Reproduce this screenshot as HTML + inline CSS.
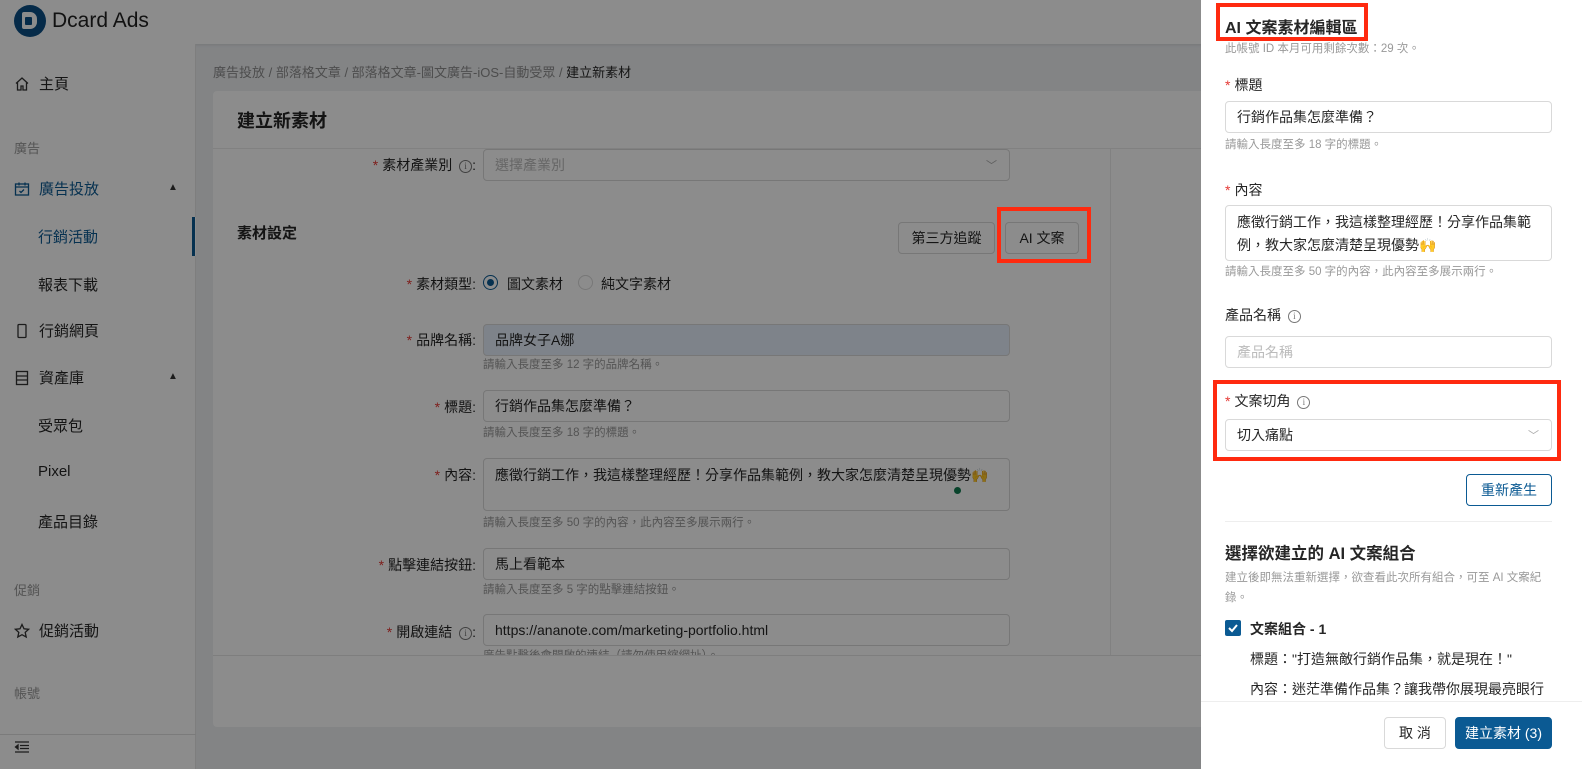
<!DOCTYPE html>
<html><head><meta charset="utf-8"><style>
*{box-sizing:border-box;margin:0;padding:0}
body{width:1582px;height:769px;overflow:hidden;position:relative;background:#eef0f3;font-family:"Liberation Sans","Noto Sans CJK TC",sans-serif;color:#262626;font-size:14px}
.a{position:absolute;white-space:nowrap}
.inp{position:absolute;border:1px solid #d9d9d9;border-radius:4px;background:#fff;padding:0 11px;display:flex;align-items:center;font-size:14px}
.help{position:absolute;font-size:11.5px;color:#999;white-space:nowrap}
.lbl{position:absolute;font-size:14px;text-align:right;white-space:nowrap}
.req{color:#e53935;margin-right:4px}
.info{display:inline-block;width:13px;height:13px;border:1px solid #777;border-radius:50%;font-size:9px;line-height:11px;text-align:center;color:#777;vertical-align:1px;margin-left:3px;font-family:"Liberation Serif",serif}
.nav{position:absolute;left:14px;font-size:15px;display:flex;align-items:center;gap:9px;white-space:nowrap}
.sub{position:absolute;left:38px;font-size:15px;white-space:nowrap}
.sec{position:absolute;left:14px;font-size:13px;color:#999}
.btn{position:absolute;border:1px solid #d9d9d9;border-radius:4px;background:#fff;display:flex;align-items:center;justify-content:center;font-size:14px}
.red{position:absolute;border:4px solid #ff2a0f;z-index:10}
</style></head><body>
<!-- header -->
<div class="a" style="left:0;top:0;width:1582px;height:44px;background:#fff;box-shadow:0 1px 3px rgba(0,0,0,.1)"></div>
<div class="a" style="left:14px;top:5px;width:32px;height:32px;border-radius:50%;background:#0b4f86"></div>
<div class="a" style="left:22px;top:12px;width:15px;height:17px;border-radius:2px 7px 7px 2px;background:#fff"></div>
<div class="a" style="left:25px;top:17px;width:7px;height:8px;background:#0b4f86;border-radius:1px"></div>
<div class="a" style="left:52px;top:8px;font-size:21px;line-height:26px;color:#222">Dcard Ads</div>
<!-- sidebar -->
<div class="a" style="left:0;top:44px;width:196px;height:725px;background:#fff;border-right:1px solid #e6e6e6"></div>
<div class="nav" style="top:73px"><svg width="16" height="16" viewBox="0 0 16 16" fill="none" stroke="#333" stroke-width="1.3"><path d="M2 7.5L8 2l6 5.5M3.5 6.5V14h3.5v-4h2v4h3.5V6.5"/></svg>主頁</div>
<div class="sec" style="top:138px">廣告</div>
<div class="nav" style="top:178px;color:#0b5a93"><svg width="16" height="16" viewBox="0 0 16 16" fill="none" stroke="#0b5a93" stroke-width="1.3"><rect x="1.5" y="3" width="13" height="11"/><path d="M1.5 6h13M5 1.5v3M11 1.5v3M5.5 10l1.5 1.5 3-3"/></svg>廣告投放</div>
<div class="a" style="left:168px;top:182px;font-size:10px;color:#333">▲</div>
<div class="a" style="left:0;top:217px;width:196px;height:39px;background:#fff"></div>
<div class="a" style="left:192px;top:217px;width:3px;height:39px;background:#0b5a93"></div>
<div class="sub" style="top:226px;color:#0b5a93">行銷活動</div>
<div class="sub" style="top:274px">報表下載</div>
<div class="nav" style="top:320px"><svg width="16" height="16" viewBox="0 0 16 16" fill="none" stroke="#333" stroke-width="1.3"><rect x="4" y="1.5" width="8" height="13" rx="1"/></svg>行銷網頁</div>
<div class="nav" style="top:367px"><svg width="16" height="16" viewBox="0 0 16 16" fill="none" stroke="#333" stroke-width="1.3"><rect x="2.5" y="1.5" width="11" height="13"/><path d="M2.5 6h11M2.5 10h11"/></svg>資產庫</div>
<div class="a" style="left:168px;top:371px;font-size:10px;color:#333">▲</div>
<div class="sub" style="top:415px">受眾包</div>
<div class="sub" style="top:463px">Pixel</div>
<div class="sub" style="top:511px">產品目錄</div>
<div class="sec" style="top:580px">促銷</div>
<div class="nav" style="top:620px"><svg width="16" height="16" viewBox="0 0 16 16" fill="none" stroke="#333" stroke-width="1.3"><path d="M8 1.5l2 4.3 4.6.5-3.4 3.1 1 4.6L8 11.7 3.8 14l1-4.6L1.4 6.3 6 5.8z"/></svg>促銷活動</div>
<div class="sec" style="top:683px">帳號</div>
<div class="a" style="left:0;top:734px;width:196px;height:1px;background:#e0e0e0"></div>
<svg class="a" style="left:14px;top:741px" width="16" height="12" viewBox="0 0 16 12" fill="none" stroke="#333" stroke-width="1.3"><path d="M1 1h14M6 4.5h9M6 7.5h9M1 11h14"/><path d="M4 4l-2.5 2L4 8z" fill="#333"/></svg>
<!-- breadcrumb -->
<div class="a" style="left:213px;top:62px;font-size:13px;color:#8c8c8c">廣告投放 / 部落格文章 / 部落格文章-圖文廣告-iOS-自動受眾 / <span style="color:#262626">建立新素材</span></div>
<!-- card -->
<div class="a" style="left:213px;top:91px;width:1010px;height:636px;background:#fff;border-radius:4px"></div>
<div class="a" style="left:237px;top:107px;font-size:18px;font-weight:bold">建立新素材</div>
<div class="a" style="left:213px;top:148px;width:1000px;height:1px;background:#ececec"></div>
<div class="a" style="left:1110px;top:149px;width:1px;height:506px;background:#ececec"></div>
<div class="a" style="left:213px;top:655px;width:1000px;height:1px;background:#e6e6e6"></div>

<div class="lbl" style="right:1106px;top:155px"><span class="req">*</span>素材產業別 <span class="info">i</span>:</div>
<div class="inp" style="left:483px;top:149px;width:527px;height:32px;color:#bbb">選擇產業別<span style="position:absolute;right:12px;color:#aaa;font-size:11px">﹀</span></div>
<div class="a" style="left:237px;top:222px;font-size:15px;font-weight:bold">素材設定</div>
<div class="btn" style="left:898px;top:222px;width:97px;height:32px">第三方追蹤</div>
<div class="btn" style="left:1005px;top:222px;width:74px;height:32px">AI 文案</div>

<div class="lbl" style="right:1106px;top:274px"><span class="req">*</span>素材類型:</div>
<div class="a" style="left:483px;top:275px;width:15px;height:15px;border:1px solid #0b5a93;border-radius:50%"></div>
<div class="a" style="left:487px;top:279px;width:7px;height:7px;background:#0b5a93;border-radius:50%"></div>
<div class="a" style="left:507px;top:274px">圖文素材</div>
<div class="a" style="left:578px;top:275px;width:15px;height:15px;border:1px solid #d9d9d9;border-radius:50%"></div>
<div class="a" style="left:601px;top:274px">純文字素材</div>

<div class="lbl" style="right:1106px;top:330px"><span class="req">*</span>品牌名稱:</div>
<div class="inp" style="left:483px;top:324px;width:527px;height:32px;background:#e6eefb">品牌女子A娜</div>
<div class="help" style="left:483px;top:356px">請輸入長度至多 12 字的品牌名稱。</div>

<div class="lbl" style="right:1106px;top:397px"><span class="req">*</span>標題:</div>
<div class="inp" style="left:483px;top:390px;width:527px;height:32px">行銷作品集怎麼準備？</div>
<div class="help" style="left:483px;top:424px">請輸入長度至多 18 字的標題。</div>

<div class="lbl" style="right:1106px;top:465px"><span class="req">*</span>內容:</div>
<div class="inp" style="left:483px;top:458px;width:527px;height:53px;align-items:flex-start;padding-top:6px">應徵行銷工作，我這樣整理經歷！分享作品集範例，教大家怎麼清楚呈現優勢🙌</div>
<div class="a" style="left:954px;top:487px;width:7px;height:7px;border-radius:50%;background:#0f7a4f"></div>
<div class="help" style="left:483px;top:514px">請輸入長度至多 50 字的內容，此內容至多展示兩行。</div>

<div class="lbl" style="right:1106px;top:555px"><span class="req">*</span>點擊連結按鈕:</div>
<div class="inp" style="left:483px;top:548px;width:527px;height:32px">馬上看範本</div>
<div class="help" style="left:483px;top:581px">請輸入長度至多 5 字的點擊連結按鈕。</div>

<div class="lbl" style="right:1106px;top:622px"><span class="req">*</span>開啟連結 <span class="info">i</span>:</div>
<div class="inp" style="left:483px;top:614px;width:527px;height:32px">https://ananote.com/marketing-portfolio.html</div>
<div class="a" style="left:483px;top:647px;width:300px;height:8px;overflow:hidden;font-size:11.5px;color:#999">廣告點擊後會開啟的連結（請勿使用縮網址）。</div>

<!-- mask -->
<div class="a" style="left:0;top:0;width:1201px;height:769px;background:rgba(0,0,0,0.45)"></div>
<div class="red" style="left:997px;top:207px;width:94px;height:56px"></div>

<!-- drawer -->
<div class="a" style="left:1201px;top:0;width:381px;height:769px;background:#fff"></div>
<div class="a" style="left:1225px;top:14px;font-size:16px;font-weight:bold">AI 文案素材編輯區</div>
<div class="red" style="left:1216px;top:3px;width:152px;height:38px"></div>
<div class="a" style="left:1225px;top:40px;font-size:11.5px;color:#999">此帳號 ID 本月可用剩餘次數：29 次。</div>
<div class="a" style="left:1225px;top:75px"><span class="req">*</span>標題</div>
<div class="inp" style="left:1225px;top:101px;width:327px;height:32px">行銷作品集怎麼準備？</div>
<div class="help" style="left:1225px;top:136px">請輸入長度至多 18 字的標題。</div>
<div class="a" style="left:1225px;top:180px"><span class="req">*</span>內容</div>
<div class="inp" style="left:1225px;top:205px;width:327px;height:56px;white-space:normal;align-items:flex-start;padding-top:5px;line-height:23px">應徵行銷工作，我這樣整理經歷！分享作品集範例，教大家怎麼清楚呈現優勢🙌</div>
<div class="help" style="left:1225px;top:263px">請輸入長度至多 50 字的內容，此內容至多展示兩行。</div>
<div class="a" style="left:1225px;top:305px">產品名稱 <span class="info">i</span></div>
<div class="inp" style="left:1225px;top:336px;width:327px;height:32px;color:#bbb">產品名稱</div>
<div class="a" style="left:1225px;top:391px"><span class="req">*</span>文案切角 <span class="info">i</span></div>
<div class="inp" style="left:1225px;top:419px;width:327px;height:32px">切入痛點<span style="position:absolute;right:12px;color:#aaa;font-size:11px">﹀</span></div>
<div class="red" style="left:1213px;top:380px;width:348px;height:81px"></div>
<div class="btn" style="left:1466px;top:474px;width:86px;height:32px;border-color:#0b5a93;color:#0b5a93">重新產生</div>
<div class="a" style="left:1225px;top:521px;width:327px;height:1px;background:#eee"></div>
<div class="a" style="left:1225px;top:540px;font-size:16.5px;font-weight:bold">選擇欲建立的 AI 文案組合</div>
<div class="a" style="left:1225px;top:568px;width:330px;white-space:normal;font-size:11.5px;color:#999;line-height:20px">建立後即無法重新選擇，欲查看此次所有組合，可至 AI 文案紀錄。</div>
<div class="a" style="left:1225px;top:620px;width:16px;height:16px;background:#0b5a93;border-radius:2px"></div>
<svg class="a" style="left:1227px;top:622px" width="12" height="12" viewBox="0 0 12 12" fill="none" stroke="#fff" stroke-width="2"><path d="M2 6l3 3 5-6"/></svg>
<div class="a" style="left:1250px;top:619px;font-weight:bold">文案組合 - 1</div>
<div class="a" style="left:1250px;top:649px">標題："打造無敵行銷作品集，就是現在！"</div>
<div class="a" style="left:1250px;top:679px;height:22px;overflow:hidden">內容：迷茫準備作品集？讓我帶你展現最亮眼行</div>
<div class="a" style="left:1201px;top:701px;width:381px;height:68px;background:#fff;border-top:1px solid #eee"></div>
<div class="btn" style="left:1384px;top:717px;width:62px;height:32px">取 消</div>
<div class="btn" style="left:1455px;top:717px;width:97px;height:32px;background:#0b5a93;border-color:#0b5a93;color:#fff">建立素材 (3)</div>
</body></html>
